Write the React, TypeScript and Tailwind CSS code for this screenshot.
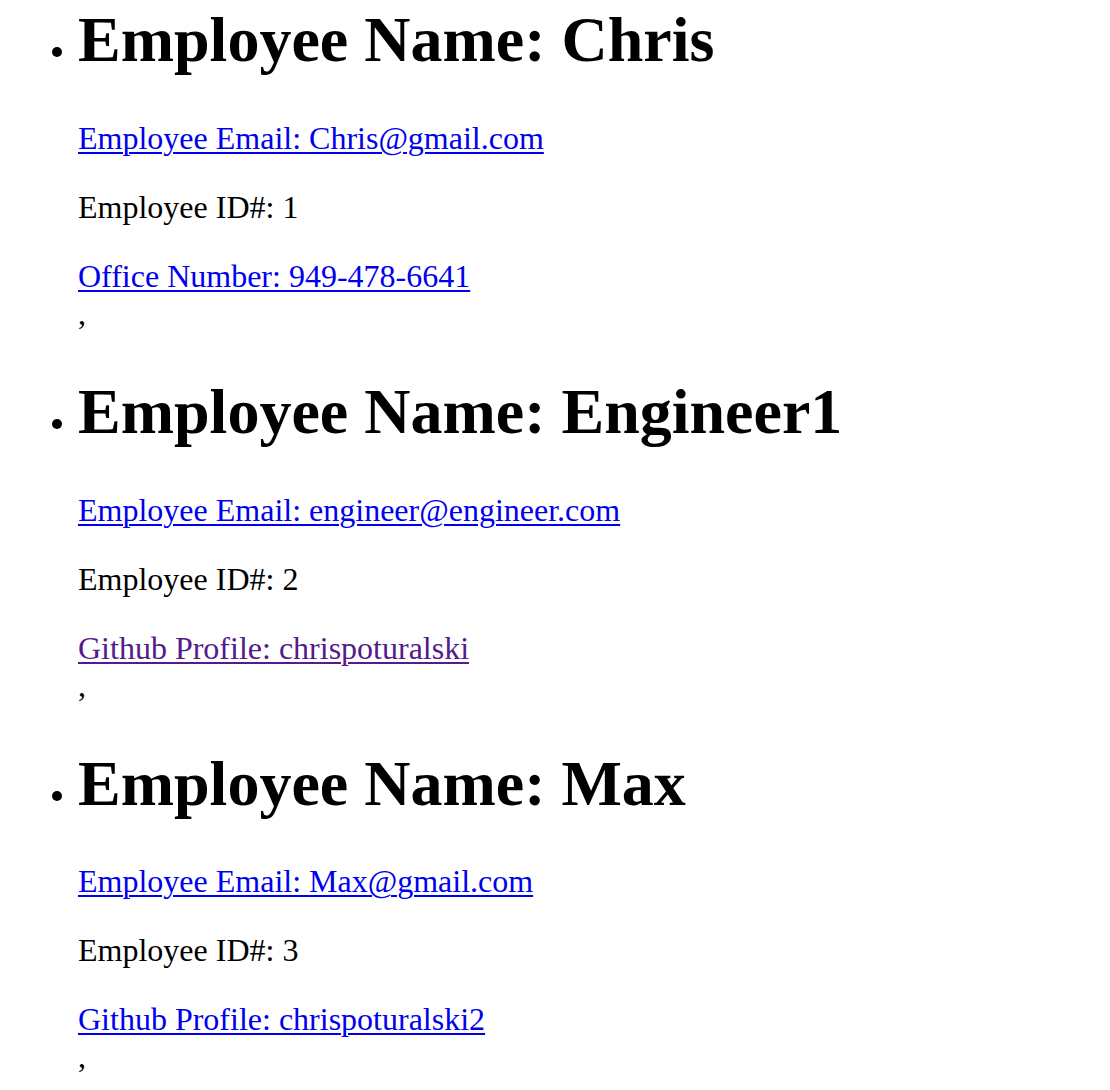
import React from "react";

interface Employee {
  name: string;
  email: string;
  id: number;
  extra: string;
  visited: boolean;
}

const employees: Employee[] = [
  {
    name: "Chris",
    email: "Chris@gmail.com",
    id: 1,
    extra: "Office Number: 949-478-6641",
    visited: false,
  },
  {
    name: "Engineer1",
    email: "engineer@engineer.com",
    id: 2,
    extra: "Github Profile: chrispoturalski",
    visited: true,
  },
  {
    name: "Max",
    email: "Max@gmail.com",
    id: 3,
    extra: "Github Profile: chrispoturalski2",
    visited: false,
  },
];

const linkBase = "underline decoration-[2px] underline-offset-[3px]";

export default function App() {
  return (
    <div className="min-h-screen bg-white text-black font-['Liberation_Serif',serif] text-[32px] leading-[normal]">
      <ul className="list-disc pl-[78px] pt-[3px]">
        {employees.map((e, i) => (
          <li key={e.id}>
            <h1
              className={
                i === 0
                  ? "mt-0 mb-[42.88px] text-[64px] font-bold"
                  : "mt-[42.88px] mb-[42.88px] text-[64px] font-bold"
              }
            >
              Employee Name: {e.name}
            </h1>
            <p className="mb-[32px]">
              <a href={`mailto:${e.email}`} className={`text-[#0000ee] ${linkBase}`}>
                Employee Email: {e.email}
              </a>
            </p>
            <p className="mb-[32px]">Employee ID#: {e.id}</p>
            <p>
              <a
                href="#"
                className={
                  e.visited
                    ? `text-[#551a8b] ${linkBase}`
                    : `text-[#0000ee] ${linkBase}`
                }
              >
                {e.extra}
              </a>
            </p>
            <div>,</div>
          </li>
        ))}
      </ul>
    </div>
  );
}
